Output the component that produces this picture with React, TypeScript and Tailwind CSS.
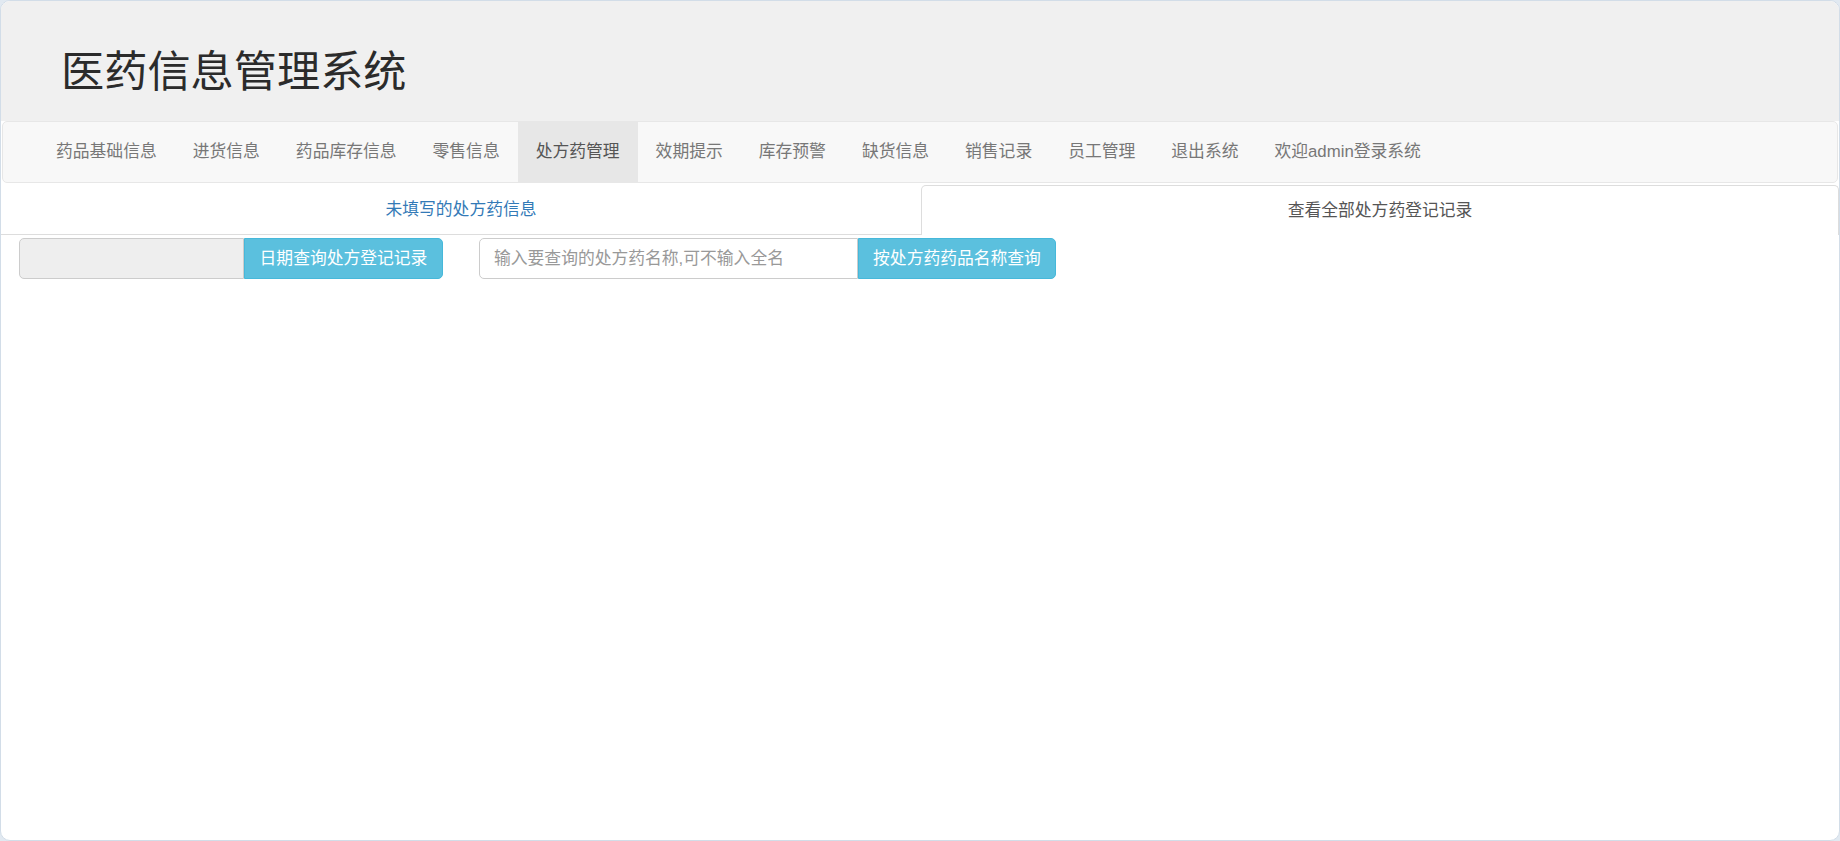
import React from "react";

const font = {
  fontFamily:
    '"Liberation Sans", "Noto Sans CJK SC", "Noto Sans", sans-serif',
};

const navItems = [
  "药品基础信息",
  "进货信息",
  "药品库存信息",
  "零售信息",
  "处方药管理",
  "效期提示",
  "库存预警",
  "缺货信息",
  "销售记录",
  "员工管理",
  "退出系统",
  "欢迎admin登录系统",
];

export default function App() {
  return (
    <div className="h-[841px] bg-[#e1e9f1]" style={font}>
      <div className="h-[841px] rounded-[10px] border border-[#d2dde8] bg-white overflow-hidden flex flex-col">
        <div className="h-[120px] shrink-0 bg-[#f0f0f0] pl-[60px] pt-[48px]">
          <h1 className="text-[43.2px] leading-[47px] text-[#2b2b2b] font-normal m-0">
            医药信息管理系统
          </h1>
        </div>
        <div className="h-[62px] shrink-0 mx-[1px] border border-[#e7e7e7] rounded-[5px] bg-[#f8f8f8] flex pl-[35px]">
          {navItems.map((t) => (
            <a
              key={t}
              className={
                t === "处方药管理"
                  ? "h-full flex items-center px-[18px] text-[16.8px] text-[#555] bg-[#e7e7e7] whitespace-nowrap"
                  : "h-full flex items-center px-[18px] text-[16.8px] text-[#777] whitespace-nowrap"
              }
            >
              {t}
            </a>
          ))}
        </div>
        <div className="flex mt-[2px] h-[50px] shrink-0">
          <div className="w-[920px] shrink-0 border-b border-[#ddd] flex items-center justify-center text-[16.8px] text-[#337ab7]">
            未填写的处方药信息
          </div>
          <div className="flex-1 border border-b-0 border-[#ddd] rounded-t-[5px] bg-white flex items-center justify-center text-[16.8px] text-[#555]">
            查看全部处方药登记记录
          </div>
        </div>
        <div className="flex mt-[3px] pl-[18px]">
          <div className="flex h-[41px]">
            <input
              readOnly
              className="w-[225px] h-full bg-[#eee] border border-[#ccc] rounded-l-[5px] outline-none"
            />
            <button className="w-[199px] h-full bg-[#5bc0de] border border-[#46b8da] rounded-r-[5px] text-white text-[16.8px] whitespace-nowrap">
              日期查询处方登记记录
            </button>
          </div>
          <div className="flex h-[41px] ml-[36px]">
            <input
              placeholder="输入要查询的处方药名称,可不输入全名"
              className="w-[379px] h-full bg-white border border-[#ccc] rounded-l-[5px] px-[14px] text-[16.8px] text-[#555] placeholder:text-[#999] outline-none"
              style={font}
            />
            <button className="w-[198px] h-full bg-[#5bc0de] border border-[#46b8da] rounded-r-[5px] text-white text-[16.8px] whitespace-nowrap">
              按处方药药品名称查询
            </button>
          </div>
        </div>
      </div>
    </div>
  );
}
